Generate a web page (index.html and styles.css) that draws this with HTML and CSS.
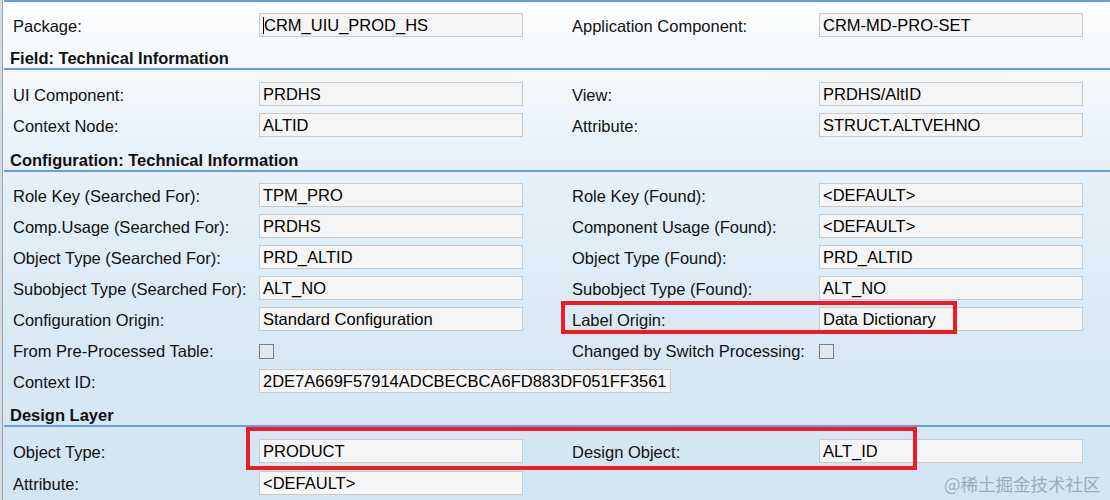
FILE: index.html
```html
<!DOCTYPE html>
<html>
<head>
<meta charset="utf-8">
<link rel="stylesheet" href="styles.css">
</head>
<body>
<div class="page">
  <div class="edge"></div>
  <div class="main">
    <div class="toprule"></div>
    <div class="grid g1">
      <div class="lbl">Package:</div>
      <div class="fld"><span class="caret"></span>CRM_UIU_PROD_HS</div>
      <div class="lbl">Application Component:</div>
      <div class="fld">CRM-MD-PRO-SET</div>
    </div>

    <h2 class="sec">Field: Technical Information</h2>
    <div class="grid g2">
      <div class="lbl">UI Component:</div>
      <div class="fld">PRDHS</div>
      <div class="lbl">View:</div>
      <div class="fld">PRDHS/AltID</div>
      <div class="lbl">Context Node:</div>
      <div class="fld">ALTID</div>
      <div class="lbl">Attribute:</div>
      <div class="fld">STRUCT.ALTVEHNO</div>
    </div>

    <h2 class="sec">Configuration: Technical Information</h2>
    <div class="grid g3">
      <div class="lbl">Role Key (Searched For):</div>
      <div class="fld">TPM_PRO</div>
      <div class="lbl">Role Key (Found):</div>
      <div class="fld">&lt;DEFAULT&gt;</div>

      <div class="lbl">Comp.Usage (Searched For):</div>
      <div class="fld">PRDHS</div>
      <div class="lbl">Component Usage (Found):</div>
      <div class="fld">&lt;DEFAULT&gt;</div>

      <div class="lbl">Object Type (Searched For):</div>
      <div class="fld">PRD_ALTID</div>
      <div class="lbl">Object Type (Found):</div>
      <div class="fld">PRD_ALTID</div>

      <div class="lbl">Subobject Type (Searched For):</div>
      <div class="fld">ALT_NO</div>
      <div class="lbl">Subobject Type (Found):</div>
      <div class="fld">ALT_NO</div>

      <div class="lbl">Configuration Origin:</div>
      <div class="fld">Standard Configuration</div>
      <div class="lbl">Label Origin:</div>
      <div class="fld">Data Dictionary</div>

      <div class="lbl">From Pre-Processed Table:</div>
      <div class="chkcell"><span class="chk"></span></div>
      <div class="lbl">Changed by Switch Processing:</div>
      <div class="chkcell"><span class="chk"></span></div>

      <div class="lbl">Context ID:</div>
      <div class="fld wide">2DE7A669F57914ADCBECBCA6FD883DF051FF3561</div>
    </div>

    <h2 class="sec">Design Layer</h2>
    <div class="grid g4">
      <div class="lbl">Object Type:</div>
      <div class="fld">PRODUCT</div>
      <div class="lbl">Design Object:</div>
      <div class="fld">ALT_ID</div>
      <div class="lbl">Attribute:</div>
      <div class="fld">&lt;DEFAULT&gt;</div>
    </div>
  </div>

  <div class="mark mark1"></div>
  <div class="mark mark2"></div>
  <div class="watermark">@稀土掘金技术社区</div>
</div>
</body>
</html>
```

FILE: styles.css
```css
html, body {
  margin: 0;
  padding: 0;
}
body {
  width: 1110px;
  height: 500px;
  overflow: hidden;
  font-family: "Liberation Sans", Arial, sans-serif;
  font-size: 16.5px;
  color: #111;
}
.page {
  position: relative;
  display: flex;
  width: 1110px;
  height: 500px;
  background: linear-gradient(to bottom, #fdfeff 0px, #f2f7fb 90px, #e5f0f8 175px, #d9eaf5 320px, #d1e5f2 500px);
}
.edge {
  width: 2px;
  flex: none;
  background: #d3dbe3;
  border-right: 1px solid #9ea4aa;
}
.main {
  flex: 1;
  margin-left: 1px;
  min-width: 0;
}
.toprule {
  height: 0;
  border-bottom: 2px solid #6b9ae0;
}
.sec {
  margin: 0;
  padding-left: 6px;
  height: 20px;
  line-height: 20px;
  font-size: 16.5px;
  font-weight: bold;
  color: #111;
  border-bottom: 2px solid #6b9ae0;
}
.grid {
  display: grid;
  grid-template-columns: 246px 313px 247px 265px;
  grid-auto-rows: 24px;
  row-gap: 7px;
  padding-left: 9px;
}
.g1 { padding-top: 11px; padding-bottom: 11px; }
.g2 { padding-top: 12px; padding-bottom: 13px; }
.g3 { padding-top: 11px; padding-bottom: 12px; }
.g4 { padding-top: 12px; row-gap: 8px; }

.lbl {
  display: flex;
  align-items: center;
  white-space: nowrap;
  padding-top: 2px;
}
.fld {
  box-sizing: border-box;
  width: 264px;
  height: 24px;
  border: 1px solid #cacaca;
  background: #f5f5f5;
  padding-left: 3px;
  line-height: 22px;
  white-space: nowrap;
  overflow: hidden;
  color: #000;
}
.fld.wide {
  width: 412px;
  grid-column: 2 / span 3;
}
.caret {
  display: inline-block;
  width: 1px;
  height: 17px;
  background: #000;
  vertical-align: -3px;
  margin-right: 0px;
}
.chkcell {
  display: flex;
  align-items: center;
  padding-top: 2px;
}
.chk {
  display: block;
  box-sizing: border-box;
  width: 15px;
  height: 15px;
  border: 1px solid #7b7d80;
  background: #e6e7f1;
}
.mark {
  position: absolute;
  box-sizing: border-box;
  border: 4px solid #ee1c25;
}
.mark1 {
  left: 561px;
  top: 301px;
  width: 396px;
  height: 33px;
}
.mark2 {
  left: 246px;
  top: 427px;
  width: 671px;
  height: 43px;
}
.watermark {
  position: absolute;
  left: 944px;
  top: 472px;
  font-family: "Noto Sans CJK SC", sans-serif;
  font-size: 17.5px;
  line-height: 24px;
  color: rgba(110, 120, 130, 0.55);
  white-space: nowrap;
}
```
